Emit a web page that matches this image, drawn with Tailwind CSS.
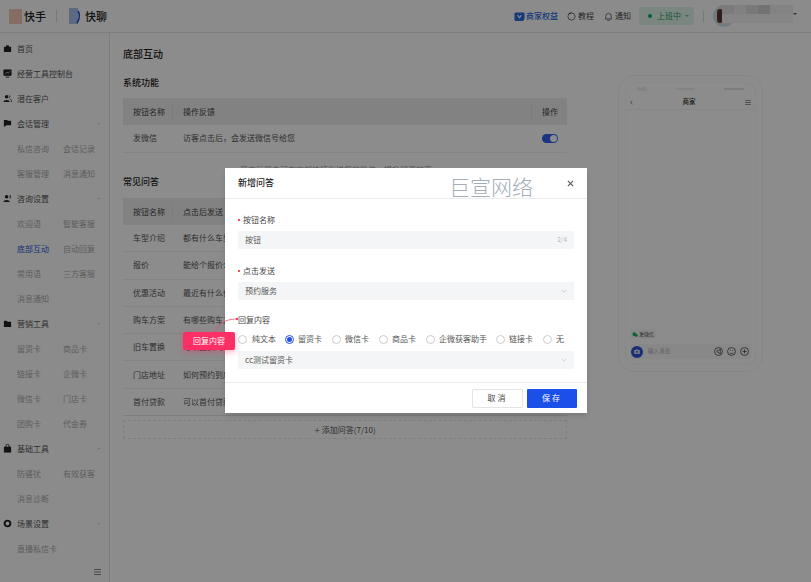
<!doctype html>
<html lang="zh">
<head>
<meta charset="utf-8">
<title>底部互动</title>
<script src="https://cdn.jsdelivr.net/npm/@tailwindcss/browser@4"></script>
</head>
<body class="m-0 overflow-hidden bg-white font-['Noto_Sans_CJK_SC','Noto_Sans',sans-serif]">
<div class="relative w-[811px] h-[582px] overflow-hidden bg-white text-[#333]">

  <!-- Top bar -->
  <header class="h-[33px] flex items-center border-b border-[#e6e6e6] bg-[#fefefe]">
    <div class="w-[9px]"></div>
    <div class="w-[13px] h-[15px] bg-[#f3c6b6] blur-[0.5px]"></div>
    <span class="ml-[2px] w-[23px] text-[11px] font-medium text-[#222]">快手</span>
    <div class="ml-[9px] w-px h-[12px] bg-[#ddd]"></div>
    <div class="ml-[12px] relative w-[14px] h-[16px]">
      <div class="w-[9px] h-[16px] bg-[#a9c0ec] blur-[0.5px]"></div>
      <svg viewBox="0 0 14 16" class="absolute inset-0 w-[14px] h-[16px]"><path d="M9 3C11 6 11 10 8 15" fill="none" stroke="#2450d8" stroke-width="1.6"/></svg>
    </div>
    <span class="ml-[2px] w-[24px] text-[11px] font-medium text-[#222]">快聊</span>

    <div class="ml-auto flex items-center h-full">
      <svg viewBox="0 0 12 12" class="w-[11px] h-[11px]"><path d="M2 1.500h8a1.500 1.500 0 0 1 1.500 1.500v5A3 3 0 0 1 8.500 11H2A1.500 1.500 0 0 1 .5 9.500V3A1.500 1.500 0 0 1 2 1.500z" fill="#2a6ae0"/><path d="M4 4.500 6 7.500 8 4.500" fill="none" stroke="#fff" stroke-width="1.200"/></svg>
      <span class="ml-[1px] w-[33px] text-[8px] text-[#2a6ae0] font-medium">商家权益</span>
      <svg viewBox="0 0 10 10" class="ml-[8px] w-[9px] h-[9px]"><circle cx="5" cy="5" r="4" fill="none" stroke="#444" stroke-width="0.800"/><path d="M5 1a4 4 0 0 0-3 1.300" fill="none" stroke="#222" stroke-width="1"/></svg>
      <span class="ml-[2px] w-[16px] text-[8px] text-[#444]">教程</span>
      <svg viewBox="0 0 10 10" class="ml-[10px] w-[9px] h-[9px]"><path d="M2 7.500V4.500a3 3 0 0 1 6 0v3M1 7.700h8M3.500 9.300h3" fill="none" stroke="#444" stroke-width="0.800"/></svg>
      <span class="ml-[2px] w-[16px] text-[8px] text-[#444]">通知</span>
      <div class="ml-[8px] w-[55px] h-[18px] flex items-center bg-[#e2f4ea] rounded-[1px] pl-[9px]">
        <span class="w-[4px] h-[4px] rounded-full bg-[#10a860]"></span>
        <span class="ml-[5px] text-[8px] text-[#22a566]">上班中</span>
        <span class="ml-[4px] w-0 h-0 border-x-[2px] border-x-transparent border-t-[2px] border-t-[#7aa98e]"></span>
      </div>
      <div class="ml-[9px] w-px h-[11px] bg-[#ddd]"></div>
      <div class="relative ml-[9px] w-[84px] h-full flex items-center">
        <div class="w-[22px] h-[22px] rounded-full bg-[#cfe0e8] overflow-hidden flex">
          <div class="ml-[4px] mt-[4px] w-[6px] h-[14px] rounded-full bg-[#5a3a34]"></div>
          <div class="mt-[7px] w-[5px] h-[12px] bg-[#f0d8cc]"></div>
        </div>
        <div class="absolute left-[9px] top-[5px] w-[71px] h-[18px] flex flex-col">
          <div class="h-[9px] flex"><div class="w-[12px] bg-[#e0e0e0]"></div><div class="w-[12px] bg-[#ececec]"></div><div class="w-[12px] bg-[#dddddd]"></div><div class="w-[12px] bg-[#cfcfcf]"></div><div class="w-[23px] bg-[#eeeeee]"></div></div>
          <div class="h-[9px] bg-[#f2f2f2]"></div>
        </div>
        <span class="absolute right-[0px] top-[13px] w-0 h-0 border-x-[2px] border-x-transparent border-t-[2.500px] border-t-[#555]"></span>
      </div>
      <div class="w-[14px]"></div>
    </div>
  </header>

  <div class="flex h-[549px]">
    <!-- Sidebar -->
    <aside class="relative w-[110px] shrink-0 border-r border-[#e4e4e4] pt-[2.500px] text-[8px] leading-[25px] bg-[#fefefe]">
      <div class="h-[25px] flex items-center pl-[3px] text-[#555]"><svg viewBox="0 0 10 10" class="w-[9px] h-[9px] mr-[5px]"><path d="M1 3h2.500V1.500h3V3H9v6H1z" fill="#222"/></svg>首页</div>
      <div class="h-[25px] flex items-center pl-[3px] text-[#555]"><svg viewBox="0 0 10 10" class="w-[9px] h-[9px] mr-[5px]"><path d="M1 1h8v6H1zM3 9h4" fill="#222" stroke="#222"/><path d="M2.500 5.500 4.500 3.500 6 4.500 8 2.500" stroke="#fff" stroke-width=".7" fill="none"/></svg>经营工具控制台</div>
      <div class="h-[25px] flex items-center pl-[3px] text-[#555]"><svg viewBox="0 0 10 10" class="w-[9px] h-[9px] mr-[5px]"><circle cx="4" cy="3" r="2" fill="#222"/><path d="M0.500 9c0-3 7-3 7 0z" fill="#222"/><path d="M6.500 1.200a2 2 0 0 1 0 3.600M8 5.500c1 .5 1.500 1.500 1.500 3.500" stroke="#222" fill="none" stroke-width=".8"/></svg>潜在客户</div>
      <div class="h-[25px] flex items-center pl-[3px] text-[#555]"><svg viewBox="0 0 10 10" class="w-[9px] h-[9px] mr-[5px]"><path d="M1 1h4v1h4v5H4L1 9z" fill="#222"/></svg>会话管理<svg viewBox="0 0 6 4" class="ml-auto mr-[8px] w-[4px] h-[3px]"><path d="M1 3l2-2 2 2" fill="none" stroke="#aaa" stroke-width=".8"/></svg></div>
      <div class="grid grid-cols-[46px_1fr] pl-[17px] text-[#aaa]">
        <span class="h-[25px]">私信咨询</span><span>会话记录</span>
        <span class="h-[25px]">客服管理</span><span>消息通知</span>
      </div>
      <div class="h-[25px] flex items-center pl-[3px] text-[#555]"><svg viewBox="0 0 10 10" class="w-[9px] h-[9px] mr-[5px]"><circle cx="4" cy="3" r="2" fill="#222"/><path d="M0.500 9c0-3 7-3 7 0z" fill="#222"/><path d="M8 1v4" stroke="#222" stroke-width="1"/></svg>咨询设置<svg viewBox="0 0 6 4" class="ml-auto mr-[8px] w-[4px] h-[3px]"><path d="M1 3l2-2 2 2" fill="none" stroke="#aaa" stroke-width=".8"/></svg></div>
      <div class="grid grid-cols-[46px_1fr] pl-[17px] text-[#aaa]">
        <span class="h-[25px]">欢迎语</span><span>智能客服</span>
        <span class="h-[25px] text-[#2a55d8]">底部互动</span><span>自动回复</span>
        <span class="h-[25px]">常用语</span><span>三方客服</span>
        <span class="h-[25px]">消息通知</span><span></span>
      </div>
      <div class="h-[25px] flex items-center pl-[3px] text-[#555]"><svg viewBox="0 0 10 10" class="w-[9px] h-[9px] mr-[5px]"><path d="M1 2h3l1 1h4v6H1z" fill="#222"/></svg>营销工具<svg viewBox="0 0 6 4" class="ml-auto mr-[8px] w-[4px] h-[3px]"><path d="M1 3l2-2 2 2" fill="none" stroke="#aaa" stroke-width=".8"/></svg></div>
      <div class="grid grid-cols-[46px_1fr] pl-[17px] text-[#aaa]">
        <span class="h-[25px]">留资卡</span><span>商品卡</span>
        <span class="h-[25px]">链接卡</span><span>企微卡</span>
        <span class="h-[25px]">微信卡</span><span>门店卡</span>
        <span class="h-[25px]">团购卡</span><span>代金券</span>
      </div>
      <div class="h-[25px] flex items-center pl-[3px] text-[#555]"><svg viewBox="0 0 10 10" class="w-[9px] h-[9px] mr-[5px]"><path d="M1 3h8v6.500H1z" fill="#222"/><path d="M3.300 4V2a1.700 1.700 0 0 1 3.400 0v2" fill="none" stroke="#222"/></svg>基础工具<svg viewBox="0 0 6 4" class="ml-auto mr-[8px] w-[4px] h-[3px]"><path d="M1 3l2-2 2 2" fill="none" stroke="#aaa" stroke-width=".8"/></svg></div>
      <div class="grid grid-cols-[46px_1fr] pl-[17px] text-[#aaa]">
        <span class="h-[25px]">防骚扰</span><span>有效获客</span>
        <span class="h-[25px]">消息诊断</span><span></span>
      </div>
      <div class="h-[25px] flex items-center pl-[3px] text-[#555]"><svg viewBox="0 0 10 10" class="w-[9px] h-[9px] mr-[5px]"><circle cx="5" cy="5" r="3.200" fill="none" stroke="#222" stroke-width="2.200"/></svg>场景设置<svg viewBox="0 0 6 4" class="ml-auto mr-[8px] w-[4px] h-[3px]"><path d="M1 3l2-2 2 2" fill="none" stroke="#aaa" stroke-width=".8"/></svg></div>
      <div class="pl-[17px] text-[#aaa] h-[25px]">直播私信卡</div>
      <svg viewBox="0 0 7 6" class="absolute right-[8px] bottom-[7px] w-[7px] h-[6px]"><path d="M0 .500h7M0 3h7M0 5.500h7" stroke="#555" stroke-width=".7"/></svg>
    </aside>

    <!-- Main -->
    <main class="relative flex-1 pl-[13px] pt-[13px] text-[8px] text-[#555]">
      <h1 class="h-[16px] leading-[16px] text-[10px] font-medium text-[#222]">底部互动</h1>
      <h2 class="mt-[14px] h-[14px] leading-[14px] text-[9px] font-medium text-[#222]">系统功能</h2>
      <div class="mt-[8px] w-[444px]">
        <div class="h-[27px] flex items-center bg-[#ededed] text-[#444]">
          <span class="w-[50px] pl-[10px] border-r border-[#dedede] leading-[12px]">按钮名称</span>
          <span class="pl-[10px] w-[359px] border-r border-[#dedede] leading-[12px]">操作反馈</span>
          <span class="pl-[10px]">操作</span>
        </div>
        <div class="h-[27.500px] flex items-center border-b border-[#f1f1f1]">
          <span class="w-[50px] pl-[10px]">发微信</span>
          <span class="pl-[10px] w-[359px]">访客点击后，会发送微信号给您</span>
          <span class="ml-[10px] w-[16px] h-[9px] rounded-full bg-[#2f5fec] flex items-center justify-end pr-[1px]"><span class="w-[7px] h-[7px] rounded-full bg-white"></span></span>
        </div>
      </div>
      <p class="mt-[12.500px] pl-[117px] h-[10px] leading-[10px] text-[#999]">开启后用户可在底部快捷发送您的微信，提升留资效率</p>
      <h2 class="h-[14px] leading-[14px] text-[9px] font-medium text-[#222]">常见问答</h2>
      <div class="mt-[9px] w-[444px]">
        <div class="h-[27px] flex items-center bg-[#ededed] text-[#444]">
          <span class="w-[50px] pl-[10px] border-r border-[#dedede] leading-[12px]">按钮名称</span>
          <span class="pl-[10px]">点击后发送</span>
        </div>
        <div class="h-[27.300px] flex items-center border-b border-[#f1f1f1]"><span class="w-[50px] pl-[10px]">车型介绍</span><span class="pl-[10px]">都有什么车型</span></div>
        <div class="h-[27.300px] flex items-center border-b border-[#f1f1f1]"><span class="w-[50px] pl-[10px]">报价</span><span class="pl-[10px]">能给个报价么</span></div>
        <div class="h-[27.300px] flex items-center border-b border-[#f1f1f1]"><span class="w-[50px] pl-[10px]">优惠活动</span><span class="pl-[10px]">最近有什么优惠</span></div>
        <div class="h-[27.300px] flex items-center border-b border-[#f1f1f1]"><span class="w-[50px] pl-[10px]">购车方案</span><span class="pl-[10px]">有哪些购车方案</span></div>
        <div class="h-[27.300px] flex items-center border-b border-[#f1f1f1]"><span class="w-[50px] pl-[10px]">旧车置换</span><span class="pl-[10px]">可以置换吗</span></div>
        <div class="h-[27.300px] flex items-center border-b border-[#f1f1f1]"><span class="w-[50px] pl-[10px]">门店地址</span><span class="pl-[10px]">如何预约到店</span></div>
        <div class="h-[27.300px] flex items-center border-b border-[#e6e6e6]"><span class="w-[50px] pl-[10px]">首付贷款</span><span class="pl-[10px]">可以首付贷款吗</span></div>
      </div>
      <div class="mt-[4px] w-[444px] h-[19px] flex items-center justify-center border border-dashed border-[#e8e8e8] text-[#555]"><span class="text-[10px] leading-none mr-[2px] font-light">+</span>添加问答(7/10)</div>

      <!-- Phone preview -->
      <div class="absolute left-[508px] top-[42px] w-[145px] h-[297px] rounded-[16px] border border-[#f5f5f5] p-[6px]">
        <div class="w-full h-full rounded-[11px] border border-[#f7f7f7] relative">
          <div class="h-[12px] flex items-center justify-between px-[11px] text-[5px] text-[#ccc]"><span>9:41</span><span class="w-[18px] h-[2px] bg-[#eeeeee] rounded-full"></span><span class="w-[20px] h-[2px] bg-[#e6e6e6]"></span></div>
          <div class="h-[15px] flex items-center justify-between px-[4px] border-b border-[#f5f5f5]">
            <svg viewBox="0 0 5 7" class="w-[3px] h-[5px]"><path d="M4 .500 1 3.500l3 3" fill="none" stroke="#444" stroke-width="1"/></svg>
            <span class="text-[6.500px] font-medium text-[#333]">商家</span>
            <svg viewBox="0 0 8 7" class="w-[6px] h-[5px]"><path d="M0 .500h8M0 3.500h8M0 6.500h8" stroke="#444" stroke-width=".9"/></svg>
          </div>
          <div class="absolute left-[4px] bottom-[25px] flex items-center h-[10px] rounded-[2px] bg-[#f7f7f7] px-[2px] text-[5px] text-[#444]"><svg viewBox="0 0 8 7" class="w-[6px] h-[5px] mr-[1px]"><circle cx="3" cy="3" r="2.500" fill="#18b060"/><circle cx="5.500" cy="4.500" r="2.200" fill="#18b060"/></svg>发微信</div>
          <div class="absolute left-[4px] right-[4px] bottom-[5px] h-[15px] rounded-[4px] bg-[#f7f7f7] flex items-center text-[5.500px] text-[#aaa]">
            <span class="ml-[1px] w-[12px] h-[12px] rounded-full bg-[#2f55d8] flex items-center justify-center"><svg viewBox="0 0 8 7" class="w-[6px] h-[5px]"><path d="M0 1.500h2.500L3 .5h2l.5 1H8V7H0z" fill="#cdd6f5"/><circle cx="4" cy="4" r="1.200" fill="#2f55d8"/></svg></span>
            <span class="ml-[5px]">输入消息</span>
            <span class="ml-auto flex gap-[4px] mr-[2px]">
              <svg viewBox="0 0 10 10" class="w-[9px] h-[9px]"><circle cx="5" cy="5" r="4.400" fill="none" stroke="#333" stroke-width=".8"/><path d="M7 2.500v5L3 5z" fill="none" stroke="#333" stroke-width=".8"/></svg>
              <svg viewBox="0 0 10 10" class="w-[9px] h-[9px]"><circle cx="5" cy="5" r="4.400" fill="none" stroke="#333" stroke-width=".8"/><path d="M3 6.500c1 1 3 1 4 0M3.200 3.800h1M5.800 3.800h1" fill="none" stroke="#333" stroke-width=".8"/></svg>
              <svg viewBox="0 0 10 10" class="w-[9px] h-[9px]"><circle cx="5" cy="5" r="4.400" fill="none" stroke="#333" stroke-width=".8"/><path d="M5 2.800v4.400M2.800 5h4.400" fill="none" stroke="#333" stroke-width=".8"/></svg>
            </span>
          </div>
        </div>
      </div>
    </main>
  </div>

  <!-- Mask -->
  <div class="absolute inset-0 bg-black/45"></div>

  <!-- Dialog -->
  <section class="absolute left-[225px] top-[168px] w-[362px] h-[245px] bg-white flex flex-col text-[8px] text-[#444] shadow-md">
    <div class="h-[31px] shrink-0 flex items-center justify-between pl-[13px] pr-[13px] border-b border-[#ececec]">
      <span class="text-[9px] font-medium text-[#222]">新增问答</span>
      <svg viewBox="0 0 8 8" class="w-[7px] h-[7px]"><path d="M1 1l6 6M7 1 1 7" stroke="#555" stroke-width="1.300"/></svg>
    </div>
    <div class="flex-1 px-[13px] pt-[14px]">
      <div class="h-[14px] flex items-center"><span class="w-[2px] h-[2px] rounded-full bg-[#f01030] mr-[3px]"></span>按钮名称</div>
      <div class="mt-[4px] h-[18px] bg-[#f4f5f6] flex items-center justify-between px-[7px] text-[#555]"><span>按钮</span><span class="text-[6.500px] text-[#bbb]">2/4</span></div>
      <div class="mt-[15px] h-[14px] flex items-center"><span class="w-[2px] h-[2px] rounded-full bg-[#f01030] mr-[3px]"></span>点击发送</div>
      <div class="mt-[4px] h-[18px] bg-[#f4f5f6] flex items-center justify-between px-[7px] text-[#555]"><span>预约服务</span><svg viewBox="0 0 8 5" class="w-[6px] h-[4px]"><path d="M1 1l3 3 3-3" fill="none" stroke="#bbb" stroke-width=".8"/></svg></div>
      <div class="mt-[13px] h-[14px] leading-[14px]">回复内容</div>
      <div class="mt-[5px] h-[14px] flex items-center text-[#555]">
        <span class="w-[9px] h-[9px] rounded-full border border-[#ccc]"></span><span class="ml-[5px] w-[33px]">纯文本</span>
        <span class="w-[9px] h-[9px] rounded-full border border-[#2450e8] flex items-center justify-center"><span class="w-[5px] h-[5px] rounded-full bg-[#2450e8]"></span></span><span class="ml-[4px] w-[34px]">留资卡</span>
        <span class="w-[9px] h-[9px] rounded-full border border-[#ccc]"></span><span class="ml-[4px] w-[34px]">微信卡</span>
        <span class="w-[9px] h-[9px] rounded-full border border-[#ccc]"></span><span class="ml-[4px] w-[34px]">商品卡</span>
        <span class="w-[9px] h-[9px] rounded-full border border-[#ccc]"></span><span class="ml-[4px] w-[57px]">企微获客助手</span>
        <span class="w-[9px] h-[9px] rounded-full border border-[#ccc]"></span><span class="ml-[4px] w-[34px]">链接卡</span>
        <span class="w-[9px] h-[9px] rounded-full border border-[#ccc]"></span><span class="ml-[4px]">无</span>
      </div>
      <div class="mt-[5px] h-[18px] bg-[#f4f5f6] flex items-center justify-between px-[7px] text-[#555]"><span>cc测试留资卡</span><svg viewBox="0 0 8 5" class="w-[6px] h-[4px]"><path d="M1 1l3 3 3-3" fill="none" stroke="#bbb" stroke-width=".8"/></svg></div>
    </div>
    <div class="h-[31px] shrink-0 border-t border-[#ececec] flex items-center justify-end pr-[10px] gap-[4px]">
      <button class="w-[51px] h-[19px] border border-[#e4e4e4] rounded-[1px] bg-white text-[8px] tracking-[2px] text-[#444]">取消</button>
      <button class="w-[50px] h-[19px] rounded-[1px] bg-[#1c4fe8] text-[8px] tracking-[2px] text-white">保存</button>
    </div>
  </section>

  <!-- Watermark -->
  <span class="absolute left-[449px] top-[173px] text-[21px] leading-[26px] font-light text-[#a3adb8]">巨宣网络</span>

  <!-- Callout -->
  <svg viewBox="0 0 40 24" class="absolute left-[210px] top-[313px] w-[40px] h-[24px]"><path d="M5 20C8 10 16 6 27 6" fill="none" stroke="#f0386b" stroke-width=".7"/><circle cx="27" cy="6" r="1.200" fill="#f0386b"/></svg>
  <div class="absolute left-[183px] top-[332px] w-[52px] h-[18px] rounded-[2px] bg-[#fb2f66] text-white text-[8px] flex items-center justify-center shadow-[0_2px_6px_rgba(251,47,102,0.4)]">回复内容</div>
</div>
</body>
</html>
